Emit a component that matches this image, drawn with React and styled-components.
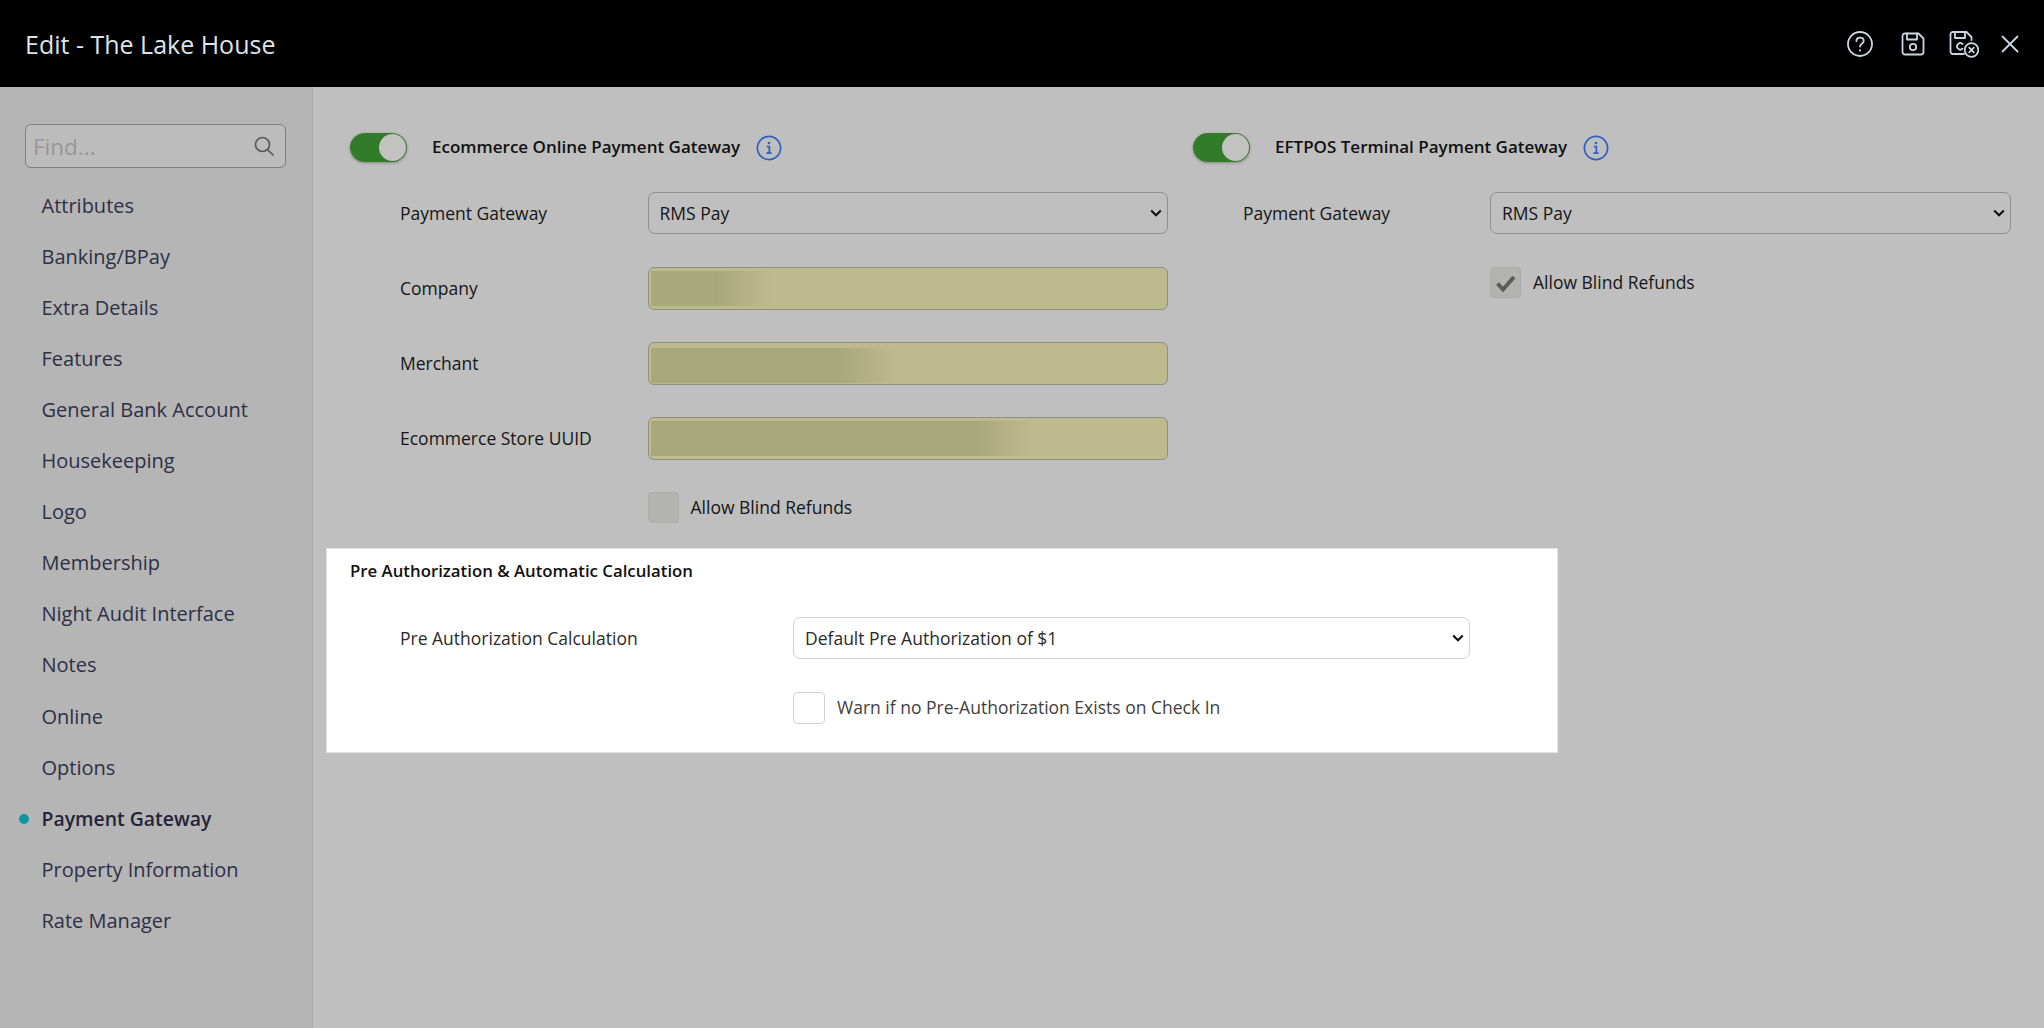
import React from 'react';
import styled, { createGlobalStyle } from 'styled-components';

const GlobalStyle = createGlobalStyle`
  html, body {
    margin: 0;
    padding: 0;
    height: 100%;
    background: #bfbfbf;
    font-family: "Open Sans", "Liberation Sans", sans-serif;
  }
`;

const Page = styled.div`
  width: 2044px;
  height: 1028px;
  display: flex;
  flex-direction: column;
  overflow: hidden;
`;

const TopBar = styled.header`
  height: 87px;
  flex: none;
  background: #000;
  display: flex;
  align-items: center;
  padding: 0 25px;
`;

const PageTitle = styled.h1`
  margin: 0;
  flex: 1;
  font-size: 25px;
  font-weight: 400;
  color: #dfe3e6;
`;

const TopIcon = styled.svg`
  width: ${(p) => p.$size || 30}px;
  height: ${(p) => p.$size || 30}px;
  margin-left: ${(p) => p.$gap || 0}px;
  fill: none;
  stroke: #c9d6e2;
  stroke-width: 1.8;
  stroke-linecap: round;
  stroke-linejoin: round;
`;

const Body = styled.div`
  flex: 1;
  display: flex;
  min-height: 0;
`;

const Sidebar = styled.nav`
  width: 312px;
  flex: none;
  box-sizing: content-box;
  padding-top: 37px;
  background: #b5b5b5;
  border-right: 1px solid #adadad;
`;

const SearchBox = styled.div`
  width: 261px;
  height: 44px;
  box-sizing: border-box;
  margin-left: 25px;
  margin-bottom: 11.6px;
  display: flex;
  align-items: center;
  justify-content: space-between;
  padding: 0 10px 0 7px;
  background: #bcbcbc;
  border: 1px solid #7f7f7f;
  border-radius: 6px;
  font-size: 22.5px;
  color: #979797;
`;

const SearchIcon = styled.svg`
  width: 22px;
  height: 22px;
  fill: none;
  stroke: #5a5a5a;
  stroke-width: 1.7;
  stroke-linecap: round;
`;

const NavList = styled.ul`
  list-style: none;
  margin: 0;
  padding: 0;
`;

const NavItem = styled.li`
  position: relative;
  height: 51.1px;
  line-height: 51px;
  padding-left: 41.5px;
  font-size: ${(p) => (p.$active ? 19.4 : 20)}px;
  font-weight: ${(p) => (p.$active ? 600 : 400)};
  color: ${(p) => (p.$active ? '#23243a' : '#2d3046')};

  ${(p) =>
    p.$active &&
    `
    &::before {
      content: '';
      position: absolute;
      left: 19px;
      top: 21px;
      width: 10px;
      height: 10px;
      border-radius: 50%;
      background: #0a97a5;
    }
  `}
`;

const Content = styled.main`
  flex: 1;
  padding: 46px 0 0 13px;
`;

const Columns = styled.div`
  display: grid;
  grid-template-columns: 843px 818px;
  padding-left: 24px;
`;

const Column = styled.section`
  display: flex;
  flex-direction: column;
  align-items: flex-start;
`;

const GatewayHead = styled.div`
  height: 29px;
  display: flex;
  align-items: center;
  margin-bottom: 30px;
`;

const Toggle = styled.span`
  width: 57px;
  height: 29px;
  box-sizing: border-box;
  flex: none;
  display: flex;
  justify-content: flex-end;
  border-radius: 15px;
  background: #317c28;
  border: 1px solid #317c28;
  box-shadow: 0 1px 3px rgba(0, 0, 0, 0.3);
  margin-right: 25px;
`;

const Knob = styled.span`
  width: 27px;
  height: 27px;
  border-radius: 50%;
  background: #c2c2c0;
`;

const HeadTitle = styled.span`
  font-size: 17px;
  font-weight: 600;
  color: #111;
  position: relative;
  top: -1px;
`;

const InfoIcon = styled.svg`
  width: 26px;
  height: 26px;
  margin-left: 16px;
  fill: none;
  stroke: #2d5fc4;
`;

const FormRow = styled.div`
  display: grid;
  grid-template-columns: ${(p) => p.$labelWidth || 247.5}px ${(p) => p.$controlWidth || 520}px;
  align-items: center;
  padding-left: ${(p) => p.$indent || 50}px;
  margin-bottom: ${(p) => (p.$gap === undefined ? 33 : p.$gap)}px;
`;

const Label = styled.label`
  font-size: 17.5px;
  line-height: 24px;
  margin-top: -1px;
  color: ${(p) => (p.$light ? '#2b2b2b' : '#161616')};
`;

const chevron =
  "data:image/svg+xml,%3Csvg xmlns='http://www.w3.org/2000/svg' width='12' height='8' viewBox='0 0 12 8'%3E%3Cpath d='M1.200 1.400L6 6.200l4.800-4.800' fill='none' stroke='%23111' stroke-width='2.100'/%3E%3C/svg%3E";

const Select = styled.select`
  width: 100%;
  height: 42px;
  box-sizing: border-box;
  padding: 0 24px 0 11px;
  appearance: none;
  font-family: inherit;
  font-size: 17.5px;
  color: ${(p) => (p.$light ? '#2a2a2a' : '#161616')};
  background: ${(p) => (p.$light ? '#fff' : '#bfbfbf')} url("${chevron}") no-repeat right 5px center;
  border: 1px solid ${(p) => (p.$light ? '#d2d2d2' : '#8f8f8f')};
  border-radius: 7px;
`;

const FilledInput = styled.div`
  height: 43px;
  box-sizing: border-box;
  padding: ${(p) => p.$top}px 2px ${(p) => 6 - p.$top}px;
  background: #bdba8d;
  border: 1px solid #8f8f86;
  border-radius: 6px;
  display: flex;
  align-items: stretch;
`;

// redacted value, the screenshot has it blurred out
const BlurredValue = styled.div`
  width: ${(p) => p.$width}px;
  background: linear-gradient(90deg, #a9a77c calc(100% - 55px), #bdba8d 100%);
`;

const CheckRow = styled.div`
  display: flex;
  align-items: center;
`;

const CheckBox = styled.span`
  width: ${(p) => p.$size || 31}px;
  height: ${(p) => p.$size || 31}px;
  box-sizing: border-box;
  flex: none;
  display: flex;
  align-items: center;
  justify-content: center;
  margin-right: 12px;
  border-radius: 4px;
  background: ${(p) => (p.$light ? '#fff' : '#b3b3af')};
  border: 1px solid ${(p) => (p.$light ? '#d2d2d2' : '#acacac')};
`;

const CheckText = styled.span`
  font-size: 17.5px;
  line-height: 24px;
  margin-top: ${(p) => (p.$light ? -2 : -1)}px;
  color: ${(p) => (p.$light ? '#3f3f3f' : '#161616')};
`;

const Spotlight = styled.section`
  width: 1231.5px;
  height: 205px;
  box-sizing: border-box;
  margin-top: 25px;
  padding: 8px 23px 0;
  background: #fff;
  border: 1px solid #e4e4e4;
`;

const SpotlightTitle = styled.h2`
  margin: 0 0 32px;
  font-size: 16.8px;
  line-height: 28px;
  font-weight: 600;
  color: #111;
`;

const Info = () => (
  <InfoIcon viewBox="0 0 26 26">
    <circle cx="13" cy="13" r="11.6" strokeWidth="1.7" />
    <circle cx="13" cy="8" r="1.3" fill="#2d5fc4" stroke="none" />
    <path d="M10.8 11.6H13.4V18M10.4 18.2H15.6" strokeWidth="1.7" />
  </InfoIcon>
);

const navItems = [
  'Attributes',
  'Banking/BPay',
  'Extra Details',
  'Features',
  'General Bank Account',
  'Housekeeping',
  'Logo',
  'Membership',
  'Night Audit Interface',
  'Notes',
  'Online',
  'Options',
  'Payment Gateway',
  'Property Information',
  'Rate Manager',
];

const App = () => (
  <Page>
    <GlobalStyle />
    <TopBar>
      <PageTitle>Edit - The Lake House</PageTitle>
      <TopIcon viewBox="0 0 26 26" $size={26}>
        <circle cx="13" cy="13" r="12" />
        <path d="M9.400 10.200c0-2.100 1.700-3.500 3.700-3.500s3.600 1.300 3.600 3.200c0 2.800-3.700 2.900-3.700 5.600" />
        <path d="M13 19.200v.2" strokeWidth="2" />
      </TopIcon>
      <TopIcon viewBox="0 0 24 24" $size={24} $gap={28}>
        <path d="M4 1.500h13.500l5 5V20a2.500 2.500 0 0 1-2.500 2.500H4A2.500 2.500 0 0 1 1.500 20V4A2.500 2.500 0 0 1 4 1.500z" />
        <path d="M6 1.500v6h10v-6" />
        <circle cx="12" cy="15" r="3.200" />
      </TopIcon>
      <TopIcon viewBox="0 0 30 30" $size={30} $gap={24}>
        <path d="M15 25H4A2.500 2.500 0 0 1 1.500 22.500V5.500A2.500 2.500 0 0 1 4 3h13.500l5 5v3" />
        <path d="M6 3v6h10V3" />
        <path d="M13.500 15a3.200 3.200 0 1 0 0 4.600" />
        <circle cx="22.500" cy="21" r="6.800" />
        <path d="M20.200 18.700l4.600 4.600M24.800 18.700l-4.600 4.600" />
      </TopIcon>
      <TopIcon viewBox="0 0 18 18" $size={18} $gap={22}>
        <path d="M1.500 1.500l15 15M16.500 1.500l-15 15" />
      </TopIcon>
    </TopBar>
    <Body>
      <Sidebar>
        <SearchBox>
          <span>Find...</span>
          <SearchIcon viewBox="0 0 22 22">
            <circle cx="9.500" cy="9.500" r="7" />
            <path d="M14.800 14.800L20 20" />
          </SearchIcon>
        </SearchBox>
        <NavList>
          {navItems.map((item) => (
            <NavItem key={item} $active={item === 'Payment Gateway'}>
              {item}
            </NavItem>
          ))}
        </NavList>
      </Sidebar>
      <Content>
        <Columns>
          <Column>
            <GatewayHead>
              <Toggle>
                <Knob />
              </Toggle>
              <HeadTitle>Ecommerce Online Payment Gateway</HeadTitle>
              <Info />
            </GatewayHead>
            <FormRow>
              <Label>Payment Gateway</Label>
              <Select defaultValue="rms">
                <option value="rms">RMS Pay</option>
              </Select>
            </FormRow>
            <FormRow $gap={32}>
              <Label>Company</Label>
              <FilledInput $top={3}>
                <BlurredValue $width={120} />
              </FilledInput>
            </FormRow>
            <FormRow $gap={32}>
              <Label>Merchant</Label>
              <FilledInput $top={5}>
                <BlurredValue $width={245} />
              </FilledInput>
            </FormRow>
            <FormRow $gap={32}>
              <Label>Ecommerce Store UUID</Label>
              <FilledInput $top={3}>
                <BlurredValue $width={380} />
              </FilledInput>
            </FormRow>
            <FormRow $gap={0}>
              <span />
              <CheckRow>
                <CheckBox />
                <CheckText>Allow Blind Refunds</CheckText>
              </CheckRow>
            </FormRow>
          </Column>
          <Column>
            <GatewayHead>
              <Toggle>
                <Knob />
              </Toggle>
              <HeadTitle>EFTPOS Terminal Payment Gateway</HeadTitle>
              <Info />
            </GatewayHead>
            <FormRow $indent={50} $labelWidth={247} $controlWidth={521}>
              <Label>Payment Gateway</Label>
              <Select defaultValue="rms">
                <option value="rms">RMS Pay</option>
              </Select>
            </FormRow>
            <FormRow $indent={50} $labelWidth={247} $controlWidth={521} $gap={0}>
              <span />
              <CheckRow>
                <CheckBox>
                  <svg width="20" height="18" viewBox="0 0 20 18">
                    <path d="M1.500 9.500l5.500 6L18 3" fill="none" stroke="#5c5c5c" strokeWidth="4" />
                  </svg>
                </CheckBox>
                <CheckText>Allow Blind Refunds</CheckText>
              </CheckRow>
            </FormRow>
          </Column>
        </Columns>
        <Spotlight>
          <SpotlightTitle>Pre Authorization &amp; Automatic Calculation</SpotlightTitle>
          <FormRow $indent={50} $labelWidth={393} $controlWidth={676.5}>
            <Label $light>Pre Authorization Calculation</Label>
            <Select $light defaultValue="one">
              <option value="one">Default Pre Authorization of $1</option>
            </Select>
          </FormRow>
          <FormRow $indent={50} $labelWidth={393} $controlWidth={676.5} $gap={0}>
            <span />
            <CheckRow>
              <CheckBox $light $size={32} />
              <CheckText $light>Warn if no Pre-Authorization Exists on Check In</CheckText>
            </CheckRow>
          </FormRow>
        </Spotlight>
      </Content>
    </Body>
  </Page>
);

export default App;
